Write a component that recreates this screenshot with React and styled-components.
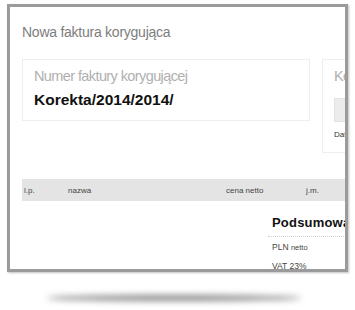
import React from 'react';
import styled, { createGlobalStyle } from 'styled-components';

const GlobalStyle = createGlobalStyle`
    html, body {
        margin: 0;
        padding: 0;
        background: #fff;
        font-family: "Liberation Sans", Arial, sans-serif;
    }
`

const Stage = styled.div`
    width: 355px;
    height: 310px;
    padding-top: 4px;
    box-sizing: border-box;
    overflow: hidden;
`

const Frame = styled.div`
    margin-left: 7px;
    width: 341px;
    height: 268px;
    box-sizing: border-box;
    border: 3px solid #9b9b9b;
    box-shadow: 1px 1px 2px rgba(0, 0, 0, 0.25);
    background: #fff;
    overflow: hidden;
`

const Page = styled.div`
    width: 600px;
    padding: 15px 0 0 12px;
`

const Title = styled.h1`
    margin: 0;
    font-size: 14px;
    line-height: 20px;
    font-weight: normal;
    color: #7d7d7d;
    letter-spacing: -0.25px;
`

const CardRow = styled.div`
    display: flex;
    align-items: flex-start;
    gap: 12px;
    margin-top: 17px;
`

const Card = styled.div`
    width: ${props => props.w}px;
    height: ${props => props.h}px;
    box-sizing: border-box;
    border: 1px solid #eeeeee;
    padding: 6px 11px 0;
`

const Label = styled.div`
    font-size: 14.5px;
    line-height: 20px;
    color: #b0b0b0;
    letter-spacing: -0.6px;
`

const Value = styled.div`
    margin-top: 4px;
    font-size: 15.5px;
    line-height: 20px;
    font-weight: bold;
    color: #111;
`

const Input = styled.div`
    margin-top: 12px;
    height: 24px;
    background: #ececec;
    border: 1px solid #e2e2e2;
    box-sizing: border-box;
`

const Small = styled.div`
    margin-top: 8px;
    font-size: 8px;
    color: #333;
`

const TableHead = styled.div`
    display: grid;
    grid-template-columns: 44px 158px 80px 80px;
    margin-top: 26px;
    height: 22px;
    align-items: center;
    background: #e4e4e4;
    font-size: 8px;
    color: #444;
`

const Cell = styled.div`
    padding-left: 2px;
`

const Bottom = styled.div`
    padding-left: 246px;
    padding-top: 13px;
`

const Summary = styled.div`
    width: 200px;
`

const SummaryTitle = styled.div`
    padding: 0 0 4px 4px;
    font-size: 13px;
    line-height: 18px;
    font-weight: bold;
    color: #111;
    letter-spacing: 0.2px;
    border-bottom: 1px dotted #cfcfcf;
`

const SummaryLine = styled.div`
    padding-left: 4px;
    margin-top: ${props => props.first ? 5 : 8}px;
    font-size: 8.5px;
    line-height: 11px;
    color: #444;
`

const Netto = styled.span`
    font-size: 7.5px;
`

const Shadow = styled.div`
    margin: 23px 0 0 46px;
    width: 256px;
    height: 6px;
    border-radius: 50%;
    background: #8a8a8a;
    filter: blur(3px);
`

const App = () => {
    return (
        <Stage>
            <GlobalStyle />
            <Frame>
                <Page>
                    <Title>Nowa faktura korygująca</Title>
                    <CardRow>
                        <Card w={288} h={62}>
                            <Label>Numer faktury korygującej</Label>
                            <Value>Korekta/2014/2014/</Value>
                        </Card>
                        <Card w={200} h={94}>
                            <Label>Kontrahent</Label>
                            <Input />
                            <Small>Data wystawienia</Small>
                        </Card>
                    </CardRow>
                    <TableHead>
                        <Cell>l.p.</Cell>
                        <Cell>nazwa</Cell>
                        <Cell>cena netto</Cell>
                        <Cell>j.m.</Cell>
                    </TableHead>
                    <Bottom>
                        <Summary>
                            <SummaryTitle>Podsumowanie</SummaryTitle>
                            <SummaryLine first>PLN <Netto>netto</Netto></SummaryLine>
                            <SummaryLine>VAT 23%</SummaryLine>
                        </Summary>
                    </Bottom>
                </Page>
            </Frame>
            <Shadow />
        </Stage>
    )
}

export default App
